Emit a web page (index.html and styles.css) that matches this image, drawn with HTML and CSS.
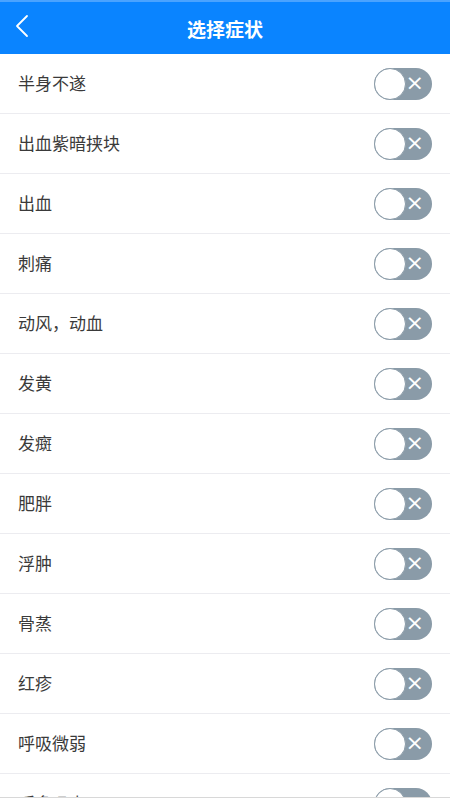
FILE: index.html
```html
<!DOCTYPE html>
<html lang="zh-CN">
  <head>
    <meta charset="UTF-8" />
    <meta name="viewport" content="width=device-width, initial-scale=1.0" />
    <title>选择症状</title>
    <link rel="stylesheet" href="styles.css">
  </head>
  <body>
    <div class="page">
      <div class="header">
        <span class="back">
          <svg width="16" height="24" viewBox="0 0 16 24"><path d="M13 2 L3 12 L13 22" fill="none" stroke="#fff" stroke-width="1.8" stroke-linecap="round" stroke-linejoin="round"/></svg>
        </span>
        <div class="title">选择症状</div>
      </div>
      <div class="list">
        <div class="row"><span>半身不遂</span><span class="switch"></span></div>
        <div class="row"><span>出血紫暗挟块</span><span class="switch"></span></div>
        <div class="row"><span>出血</span><span class="switch"></span></div>
        <div class="row"><span>刺痛</span><span class="switch"></span></div>
        <div class="row"><span>动风，动血</span><span class="switch"></span></div>
        <div class="row"><span>发黄</span><span class="switch"></span></div>
        <div class="row"><span>发癍</span><span class="switch"></span></div>
        <div class="row"><span>肥胖</span><span class="switch"></span></div>
        <div class="row"><span>浮肿</span><span class="switch"></span></div>
        <div class="row"><span>骨蒸</span><span class="switch"></span></div>
        <div class="row"><span>红疹</span><span class="switch"></span></div>
        <div class="row"><span>呼吸微弱</span><span class="switch"></span></div>
        <div class="row"><span>呼多吸少</span><span class="switch"></span></div>
      </div>
      <div class="bottom-line"></div>
    </div>
  </body>
</html>
```
FILE: styles.css
```css
* {
  padding: 0;
  margin: 0;
  box-sizing: border-box;
}
html,
body {
  width: 100%;
  height: 100%;
  overflow: hidden;
}
body {
  font-family: "Noto Sans CJK SC", "Liberation Sans", sans-serif;
  background: #fff;
  color: #333;
}
.page {
  position: relative;
  height: 800px;
  overflow: hidden;
}
.header {
  height: 54px;
  background: #0a84ff;
  border-top: 2px solid #4aa3ff;
  display: flex;
  align-items: center;
  justify-content: center;
  position: relative;
}
.back {
  position: absolute;
  left: 14px;
  top: 12px;
  display: flex;
}
.title {
  color: #fff;
  font-size: 19px;
  font-weight: bold;
}
.row {
  height: 60px;
  display: flex;
  align-items: center;
  justify-content: space-between;
  padding: 0 18px 3px;
  border-bottom: 1px solid #ececf0;
  font-size: 17px;
  color: #3a3a3a;
}
.switch {
  position: relative;
  width: 58px;
  height: 32px;
  margin-top: 3px;
  border-radius: 16px;
  background: #8a9ba8;
}
.switch::before {
  content: "";
  position: absolute;
  left: 0;
  top: 0;
  width: 32px;
  height: 32px;
  border-radius: 50%;
  background: #fff;
  border: 1.5px solid #8a9ba8;
  box-sizing: border-box;
}
.switch::after {
  content: "×";
  position: absolute;
  right: 8px;
  top: 2px;
  color: #fff;
  font-size: 22px;
  line-height: 26px;
  font-family: "DejaVu Sans", sans-serif;
}
.bottom-line {
  position: absolute;
  left: 0;
  right: 0;
  bottom: 0;
  height: 3px;
  background: #fff;
  border-top: 1px solid #d8d8d8;
}
```
